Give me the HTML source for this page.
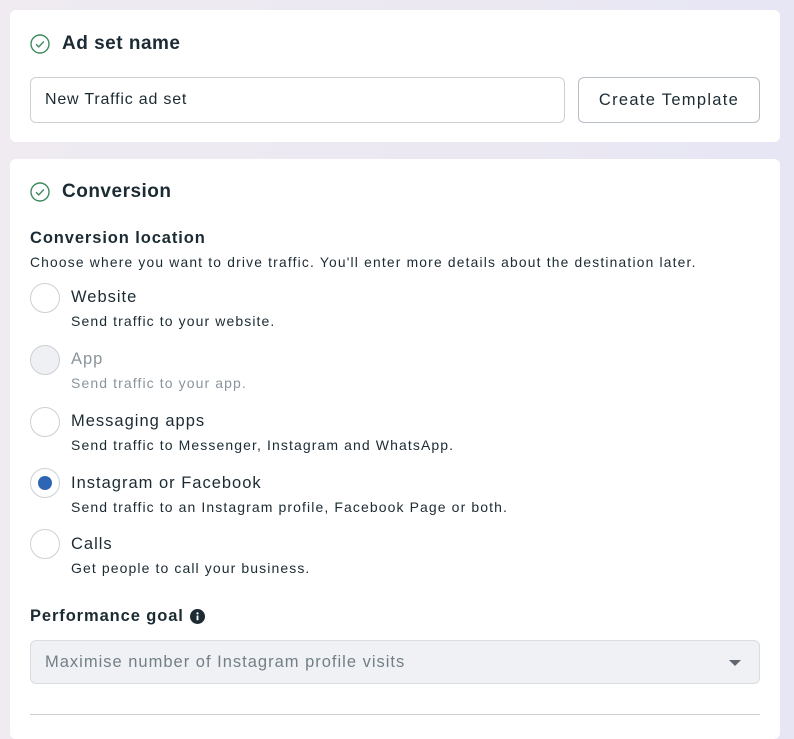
<!DOCTYPE html>
<html><head><meta charset="utf-8">
<style>
*{box-sizing:border-box;margin:0;padding:0}
body{width:794px;height:720px;overflow:hidden;background:linear-gradient(90deg,#efebf1,#ece8f2 60%,#e6e6f5);font-family:"Liberation Sans",sans-serif;color:#1c2b33;position:relative}
.card{position:absolute;left:10px;width:770px;background:#fff;border-radius:6px}
.h{position:absolute;left:20px;display:flex;align-items:center;font-weight:bold;font-size:19px;letter-spacing:0.5px;color:#1c2b33}
.h svg{margin-right:12px}
.input{position:absolute;left:20px;top:67px;width:535px;height:46px;border:1px solid #ccd0d5;border-radius:6px;font-size:16px;letter-spacing:0.8px;padding:13px 14px}
.btn{position:absolute;left:568px;top:67px;width:182px;height:46px;border:1px solid #b8bec6;border-radius:6px;font-size:16.5px;letter-spacing:1.3px;text-align:center;line-height:44px;color:#1c2b33}
.lbl{position:absolute;left:20px;font-weight:bold;font-size:16.5px;letter-spacing:0.9px}
.desc{position:absolute;left:20px;font-size:13.8px;letter-spacing:1.2px;color:#1c2b33;white-space:nowrap}
.opt{position:absolute;left:20px}
.rad{position:absolute;left:0;top:0;width:30px;height:30px;border:1px solid #ccd0d5;border-radius:50%;background:#fff}
.opt .t{position:absolute;left:41px;top:0;font-size:16.5px;letter-spacing:1px;white-space:nowrap}
.opt .s{position:absolute;left:41px;top:24px;font-size:14px;letter-spacing:1.1px;white-space:nowrap}
.dis .t,.dis .s{color:#8a949c}
.dis .rad{background:#eef0f3}
.sel{position:absolute;left:20px;top:481px;width:730px;height:44px;background:#eff1f4;border:1px solid #dadde1;border-radius:6px;font-size:16.5px;letter-spacing:1px;color:#737f88;padding:12px 14px}
.arrow{position:absolute;right:18px;top:19px;width:0;height:0;border-left:6px solid transparent;border-right:6px solid transparent;border-top:6px solid #606770}
</style></head><body>
<div class="card" style="top:10px;height:132px">
 <div class="h" style="top:23px"><svg width="20" height="20" viewBox="0 0 20 20"><circle cx="10" cy="10" r="9" fill="none" stroke="#3f8a5f" stroke-width="1.4"/><path d="M6 10.3l2.7 2.6 5.2-5.4" fill="none" stroke="#3f8a5f" stroke-width="1.4"/></svg>Ad set name</div>
 <div class="input">New Traffic ad set</div>
 <div class="btn">Create Template</div>
</div>
<div class="card" style="top:159px;height:580px">
 <div class="h" style="top:22px"><svg width="20" height="20" viewBox="0 0 20 20"><circle cx="10" cy="10" r="9" fill="none" stroke="#3f8a5f" stroke-width="1.4"/><path d="M6 10.3l2.7 2.6 5.2-5.4" fill="none" stroke="#3f8a5f" stroke-width="1.4"/></svg>Conversion</div>
 <div class="lbl" style="top:70px">Conversion location</div>
 <div class="desc" style="top:96px">Choose where you want to drive traffic. You'll enter more details about the destination later.</div>
 <div class="opt" style="top:124px"><div class="rad"></div><div class="t" style="top:5px">Website</div><div class="s" style="top:30px">Send traffic to your website.</div></div>
 <div class="opt dis" style="top:186px"><div class="rad"></div><div class="t" style="top:5px">App</div><div class="s" style="top:30px">Send traffic to your app.</div></div>
 <div class="opt" style="top:248px"><div class="rad"></div><div class="t" style="top:5px">Messaging apps</div><div class="s" style="top:30px">Send traffic to Messenger, Instagram and WhatsApp.</div></div>
 <div class="opt" style="top:309px"><div class="rad"><div style="position:absolute;left:7px;top:7px;width:14px;height:14px;border-radius:50%;background:#2f65b5"></div></div><div class="t" style="top:6px">Instagram or Facebook</div><div class="s" style="top:31px">Send traffic to an Instagram profile, Facebook Page or both.</div></div>
 <div class="opt" style="top:370px"><div class="rad"></div><div class="t" style="top:6px">Calls</div><div class="s" style="top:31px">Get people to call your business.</div></div>
 <div class="lbl" style="top:448px;display:flex;align-items:center">Performance goal<svg style="margin-left:6px" width="15" height="15" viewBox="0 0 16 16"><circle cx="8" cy="8" r="8" fill="#1c2b33"/><rect x="7" y="7" width="2" height="5" fill="#fff"/><circle cx="8" cy="4.6" r="1.2" fill="#fff"/></svg></div>
 <div class="sel">Maximise number of Instagram profile visits<div class="arrow"></div></div>
 <div style="position:absolute;left:20px;top:555px;width:730px;height:1px;background:#ccd0d5"></div>
</div>
</body></html>
